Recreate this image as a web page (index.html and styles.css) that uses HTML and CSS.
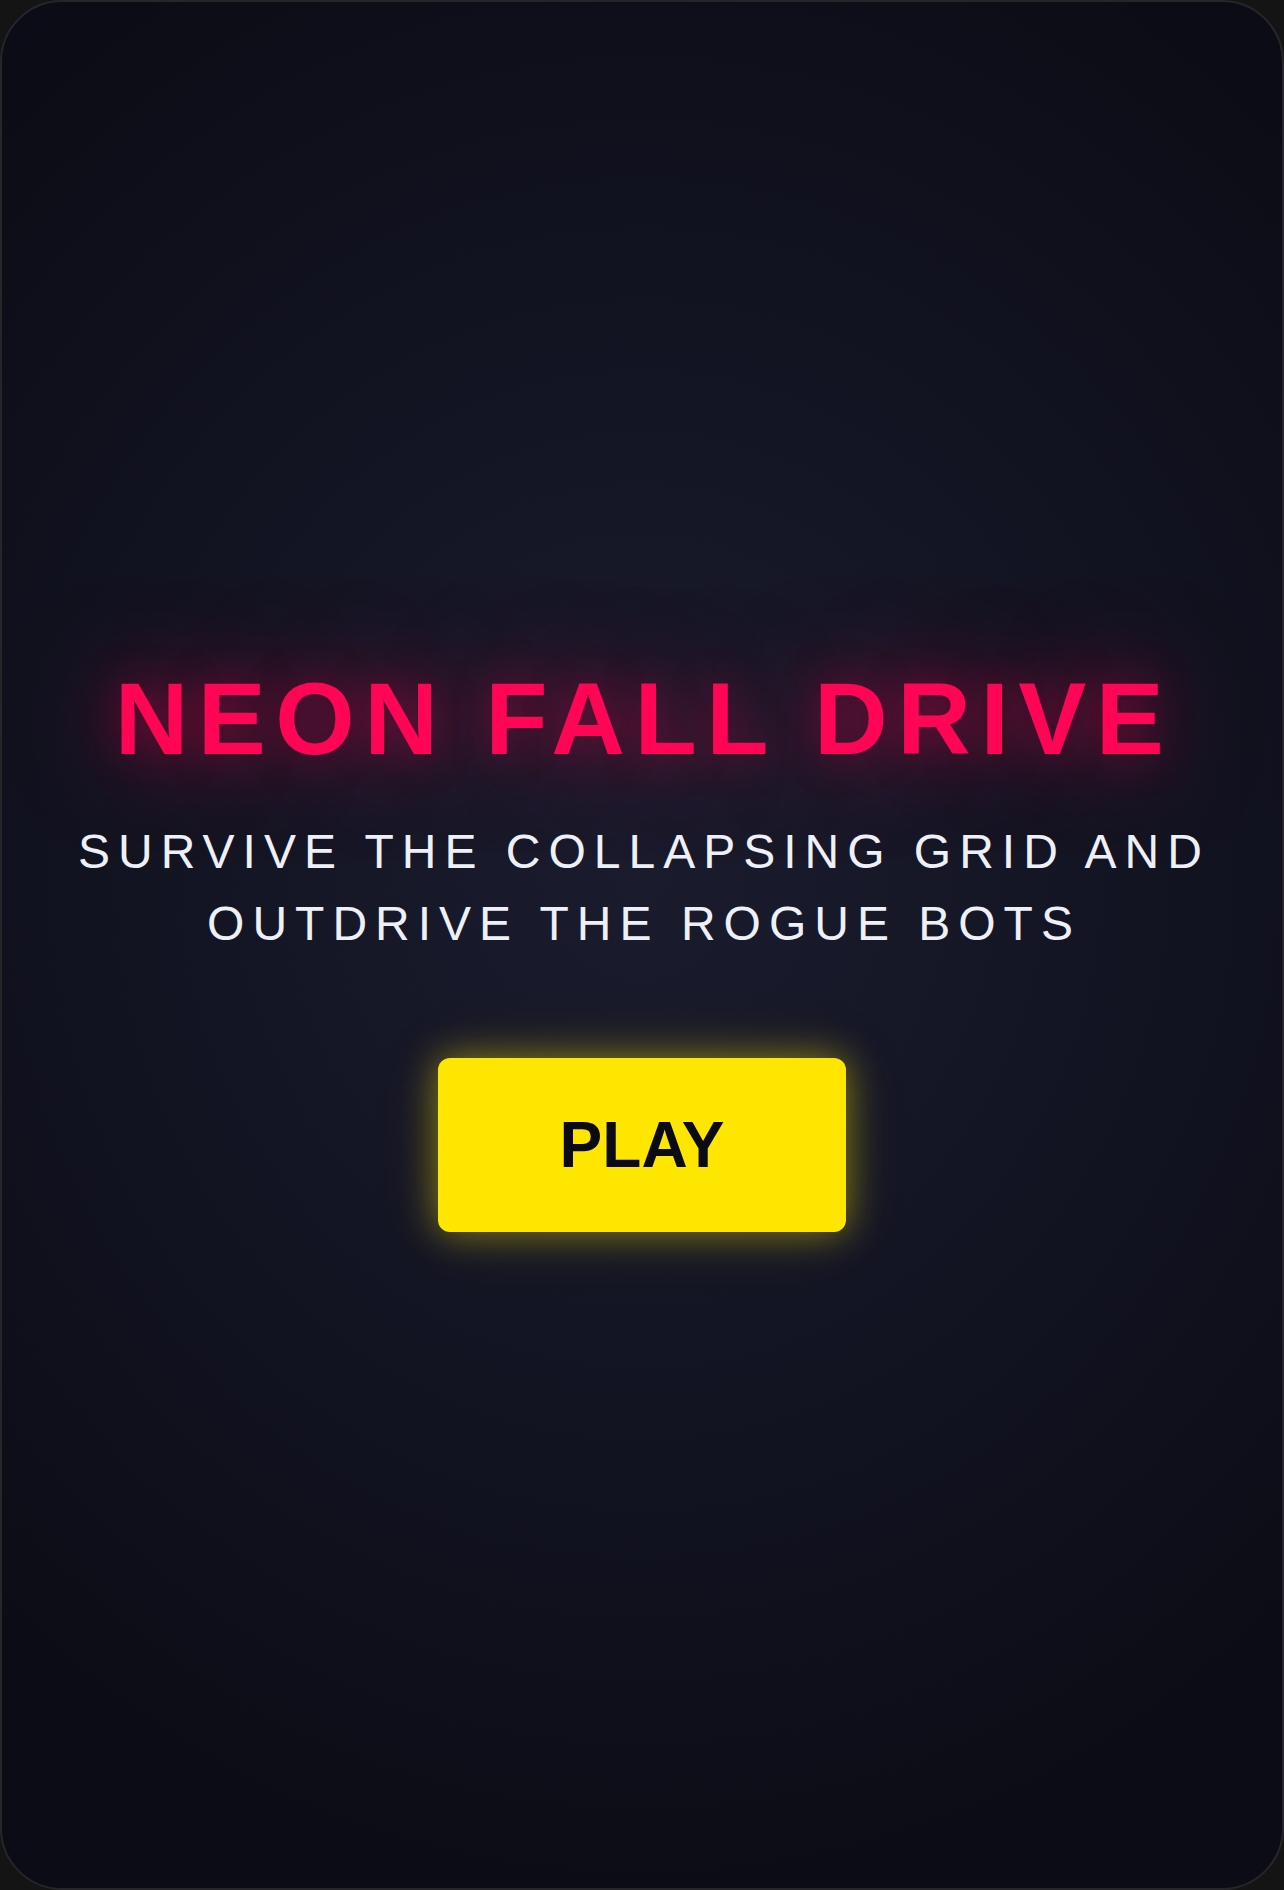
FILE: index.html
```html
<!DOCTYPE html>
<html lang="en">
<head>
<meta charset="utf-8">
<title>Neon Fall Drive</title>
<link rel="stylesheet" href="styles.css">
</head>
<body>
<main class="screen">
  <section class="menu">
    <h1 class="title">NEON FALL DRIVE</h1>
    <p class="tagline">SURVIVE THE COLLAPSING GRID AND OUTDRIVE THE ROGUE BOTS</p>
    <button class="play" type="button">PLAY</button>
  </section>
</main>
</body>
</html>
```
FILE: styles.css
```css
html, body {
  margin: 0;
  padding: 0;
  background: #141414;
}
.screen {
  box-sizing: border-box;
  width: 1284px;
  height: 1890px;
  border: 2px solid #26262a;
  border-radius: 62px;
  overflow: hidden;
  background: radial-gradient(ellipse 75% 55% at 50% 46%, #1a1b2d 0%, #141524 45%, #0c0c16 100%);
  display: flex;
  align-items: center;
  justify-content: center;
}
.menu {
  display: flex;
  flex-direction: column;
  align-items: center;
  padding: 0 60px;
  text-align: center;
}
.title {
  margin: 0 0 36px;
  padding-left: 4px;
  font-family: "Liberation Sans", Arial, sans-serif;
  font-weight: 700;
  font-size: 102px;
  line-height: 1.2;
  letter-spacing: 9.5px;
  color: #ff0555;
  text-shadow: 0 0 40px rgba(255, 5, 85, 0.35), 0 0 100px rgba(255, 5, 85, 0.55);
  white-space: nowrap;
}
.tagline {
  margin: 0 0 98px;
  padding-left: 4px;
  max-width: 1160px;
  font-family: "Liberation Sans", Arial, sans-serif;
  font-weight: 400;
  font-size: 48px;
  line-height: 72px;
  letter-spacing: 8px;
  color: #eef0f8;
}
.play {
  border: none;
  border-radius: 12px;
  background: #ffe600;
  color: #0b0b16;
  font-family: "Liberation Sans", Arial, sans-serif;
  font-weight: 700;
  font-size: 64px;
  line-height: 74px;
  padding: 50px 122px;
  box-shadow: 0 0 36px rgba(255, 230, 0, 0.45), 0 0 70px rgba(255, 230, 0, 0.12);
  cursor: pointer;
}
```
